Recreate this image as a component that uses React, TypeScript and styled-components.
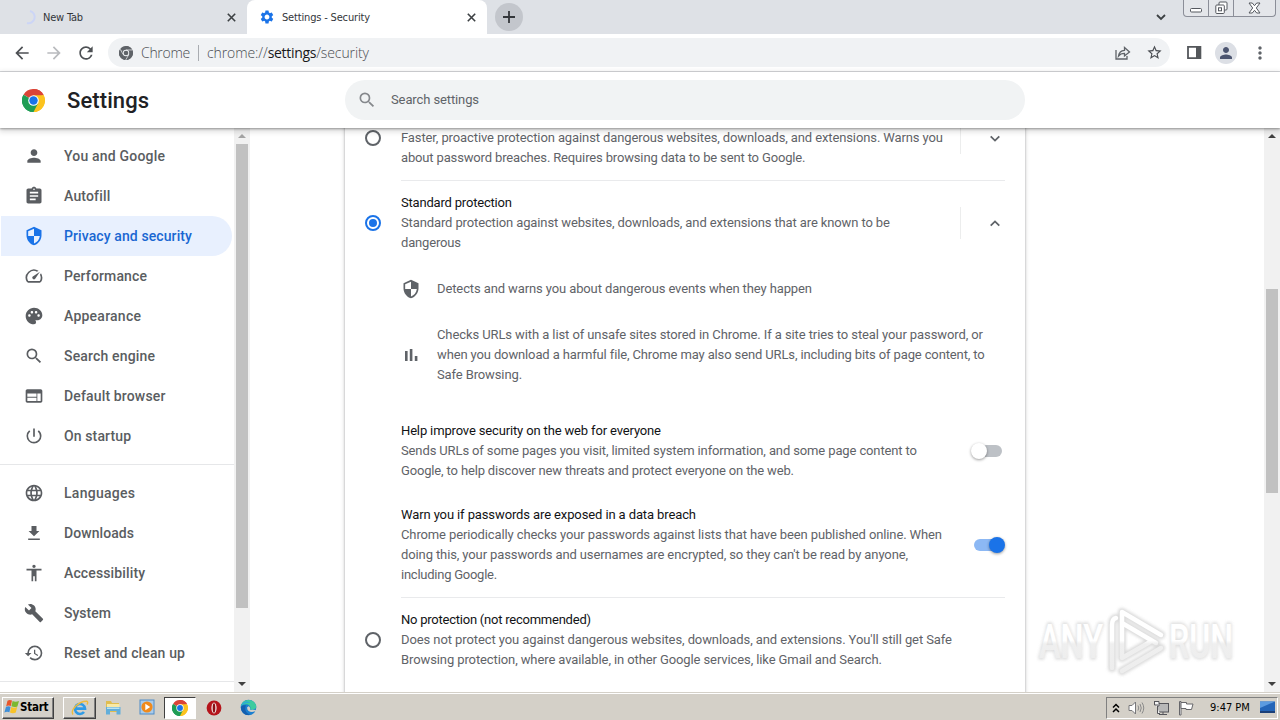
import React from 'react';
import styled, { createGlobalStyle } from 'styled-components';
import {
  MdAccessibility,
  MdArrowBack,
  MdArrowForward,
  MdAssignment,
  MdBuild,
  MdHistory,
  MdLanguage,
  MdMoreVert,
  MdPalette,
  MdPerson,
  MdPowerSettingsNew,
  MdRefresh,
  MdSearch,
  MdSecurity,
  MdSettings,
  MdSpeed,
  MdStarBorder,
  MdWeb,
} from 'react-icons/md';

const GlobalStyle = createGlobalStyle`
  * { box-sizing: border-box; }
  body {
    margin: 0;
    background: #fff;
    font-family: Roboto, "Liberation Sans", sans-serif;
    overflow: hidden;
  }
  svg { display: block; flex: none; }
`;

const Screen = styled.div`
  width: 1280px;
  height: 720px;
  display: flex;
  flex-direction: column;
  overflow: hidden;
  position: relative;
`;

/* ---------- tab strip ---------- */

const TabStrip = styled.div`
  height: 34px;
  flex: none;
  display: flex;
  background: #dee1e6;
  color: #3c4043;
`;

const Tab = styled.div<{ $active?: boolean }>`
  width: ${(p) => (p.$active ? 240 : 247)}px;
  height: 34px;
  display: flex;
  align-items: center;
  padding: 0 11px 0 ${(p) => (p.$active ? 12 : 22)}px;
  background: ${(p) => (p.$active ? '#fff' : 'transparent')};
  border-radius: 8px 8px 0 0;
  gap: ${(p) => (p.$active ? 7 : 6)}px;
`;

const TabTitle = styled.span<{ $track: number }>`
  flex: 1;
  padding-top: 1px;
  font: 11px/16px 'DejaVu Sans Condensed', 'DejaVu Sans', sans-serif;
  font-stretch: condensed;
  letter-spacing: ${(p) => p.$track}px;
  white-space: nowrap;
  color: #33363a;
`;

const NewTabButton = styled.div`
  width: 28px;
  height: 28px;
  margin: 3px 0 0 8px;
  border-radius: 50%;
  background: #c3c6cc;
  display: grid;
  place-items: center;
`;

const StripSpacer = styled.div`
  flex: 1;
`;

const TabSearch = styled.div`
  display: grid;
  place-items: center;
  width: 20px;
  margin-right: 12px;
`;

const WindowControls = styled.div`
  display: flex;
  height: 17px;
  width: 93px;
  margin-right: 4px;
  border: 1px solid #8b8e98;
  border-top: 0;
  border-radius: 0 0 4px 4px;
  background: #e4e6ea;
`;

const WindowButton = styled.div<{ $w: number }>`
  width: ${(p) => p.$w}px;
  display: grid;
  place-items: center;
  & + & {
    border-left: 1px solid #8b8e98;
  }
`;

/* ---------- toolbar ---------- */

const Toolbar = styled.div`
  height: 38px;
  flex: none;
  display: flex;
  align-items: center;
  padding: 0 12px 0 12px;
  background: #fff;
  border-bottom: 1px solid #d8dadd;
  color: #5f6368;
`;

const NavButtons = styled.div`
  display: flex;
  gap: 12px;
  margin-right: 12px;
`;

const Omnibox = styled.div`
  flex: 1;
  height: 29px;
  border-radius: 15px;
  background: #f0f2f4;
  display: flex;
  align-items: center;
  padding: 0 8px 0 11px;
  gap: 8px;
  font: 300 14px/20px 'Open Sans', sans-serif;
  color: #4a4d52;
`;

const ProductName = styled.span`
  letter-spacing: -0.3px;
  width: 49px;
  white-space: nowrap;
`;

const OmniDivider = styled.i`
  width: 1px;
  height: 16px;
  background: #a9acb1;
`;

const Url = styled.span`
  flex: 1;
  letter-spacing: -0.1px;
  b {
    font-weight: 400;
    color: #17181b;
    letter-spacing: -0.3px;
  }
`;

const OmniActions = styled.div`
  display: flex;
  gap: 15px;
  align-items: center;
  margin-right: -1px;
`;

const ToolbarActions = styled.div`
  display: flex;
  align-items: center;
  gap: 13px;
  margin-left: 17px;
  margin-right: -2px;
`;

const Avatar = styled.div`
  width: 22px;
  height: 22px;
  border-radius: 50%;
  background: #dcdfe5;
  color: #4c5570;
  display: grid;
  place-items: center;
`;

/* ---------- settings header ---------- */

const Header = styled.header`
  height: 56px;
  flex: none;
  display: flex;
  align-items: center;
  padding-left: 22px;
  background: #fff;
  box-shadow: 0 1px 2px rgba(0, 0, 0, 0.32), 0 2px 6px 1px rgba(0, 0, 0, 0.17);
  position: relative;
  z-index: 2;
`;

const PageTitle = styled.h1`
  margin: 2px 0 0 22px;
  width: 278px;
  font: 500 22px/30px Roboto, sans-serif;
  letter-spacing: 0.1px;
  color: #202124;
`;

const SearchBox = styled.div`
  width: 680px;
  height: 40px;
  border-radius: 20px;
  background: #f1f3f4;
  display: flex;
  align-items: center;
  gap: 14px;
  padding-left: 12px;
  color: #85888c;
  font-size: 13px;
  letter-spacing: -0.11px;
  span {
    padding-bottom: 1px;
    color: #5f6368;
  }
`;

/* ---------- body ---------- */

const Body = styled.div`
  height: 564px;
  flex: none;
  display: flex;
  overflow: hidden;
`;

const SideNav = styled.nav`
  width: 234px;
  padding-top: 8px;
  flex: none;
`;

const NavItem = styled.div<{ $active?: boolean; $track: number }>`
  height: 40px;
  margin: 0 2px 0 1px;
  padding-left: 23px;
  display: flex;
  align-items: center;
  gap: 20px;
  border-radius: 0 20px 20px 0;
  font-weight: 500;
  font-size: 14px;
  letter-spacing: ${(p) => p.$track}px;
  white-space: nowrap;
  color: ${(p) => (p.$active ? '#1967d2' : '#5a5d61')};
  background: ${(p) => (p.$active ? '#e8f0fe' : 'transparent')};
  svg {
    color: ${(p) => (p.$active ? '#1a73e8' : '#5a5d61')};
  }
`;

const NavRule = styled.hr`
  border: 0;
  height: 1px;
  background: #e6e7e9;
  margin: 8px 0;
`;

const Scrollbar = styled.div`
  width: 16px;
  height: 564px;
  flex: none;
  display: flex;
  flex-direction: column;
  align-items: center;
  background: #f1f1f1;
`;

const ScrollArrow = styled.div<{ $end?: boolean; $dim?: boolean }>`
  height: 16px;
  width: 16px;
  display: grid;
  place-items: center;
  margin-top: ${(p) => (p.$end ? 'auto' : 0)};
  color: ${(p) => (p.$dim ? '#a3a3a3' : '#404040')};
`;

const Thumb = styled.div<{ $offset: number; $length: number }>`
  width: 12px;
  margin-top: ${(p) => p.$offset}px;
  height: ${(p) => p.$length}px;
  background: #c1c1c1;
`;

const Main = styled.main`
  flex: 1;
  padding-left: 95px;
  overflow: hidden;
`;

const Card = styled.section`
  width: 680px;
  height: 640px;
  margin-top: -20px;
  background: #fff;
  box-shadow: 0 0 2px rgba(60, 64, 67, 0.36), 0 1px 4px 1px rgba(60, 64, 67, 0.16);
  padding: 0 20px;
`;

const Option = styled.div<{ $first?: boolean }>`
  display: flex;
  align-items: center;
  padding: ${(p) => (p.$first ? 0 : 12)}px 0 12px;
`;

const Divider = styled.hr`
  border: 0;
  height: 1px;
  margin: 0 0 0 36px;
  background: #e9eaec;
`;

const Radio = styled.i<{ $on?: boolean }>`
  width: 16px;
  height: 16px;
  flex: none;
  margin-right: 20px;
  border-radius: 50%;
  border: 2px solid ${(p) => (p.$on ? '#1a73e8' : '#5f6368')};
  display: grid;
  place-items: center;
  &::after {
    content: '';
    width: 8px;
    height: 8px;
    border-radius: 50%;
    background: ${(p) => (p.$on ? '#1a73e8' : 'transparent')};
  }
`;

const Copy = styled.div<{ $scrolled?: boolean }>`
  flex: 1;
  padding-top: ${(p) => (p.$scrolled ? 20 : 0)}px;
`;

const Line = styled.div<{ $track: number; $title?: boolean }>`
  font-size: 13px;
  line-height: 20px;
  white-space: nowrap;
  letter-spacing: ${(p) => p.$track}px;
  color: ${(p) => (p.$title ? '#121315' : '#5f6368')};
`;

const Expand = styled.div`
  height: 32px;
  width: 45px;
  border-left: 1px solid #eceded;
  display: flex;
  align-items: center;
  padding-left: 29px;
`;

const Detail = styled.div<{ $top: number }>`
  display: flex;
  align-items: center;
  gap: 16px;
  margin: ${(p) => p.$top}px 0 0 36px;
  color: #5f6368;
`;

const SubSetting = styled.div<{ $top: number }>`
  display: flex;
  align-items: center;
  margin: ${(p) => p.$top}px 0 0 36px;
`;

const Toggle = styled.div<{ $on?: boolean }>`
  width: 28px;
  height: 12px;
  margin-right: 3px;
  border-radius: 6px;
  background: ${(p) => (p.$on ? '#8cb8f4' : '#bdc1c6')};
  display: flex;
  align-items: center;
  justify-content: ${(p) => (p.$on ? 'flex-end' : 'flex-start')};
  &::after {
    content: '';
    width: 16px;
    height: 16px;
    margin: 0 -3px;
    flex: none;
    border-radius: 50%;
    background: ${(p) => (p.$on ? '#1a73e8' : '#fff')};
    box-shadow: 0 1px 3px rgba(0, 0, 0, 0.4);
  }
`;

const SectionEnd = styled.div`
  height: 12px;
`;

/* ---------- watermark ---------- */

const Watermark = styled.div`
  position: absolute;
  left: 1030px;
  top: 600px;
  z-index: 3;
`;

/* ---------- taskbar ---------- */

const Taskbar = styled.footer`
  height: 28px;
  flex: none;
  background: #d4d0c8;
  border-top: 1px solid #d4d0c8;
  box-shadow: inset 0 1px 0 #fff;
  display: flex;
  align-items: center;
  padding: 3px 2px 1px 2px;
`;

const StartButton = styled.div`
  width: 52px;
  height: 22px;
  display: flex;
  align-items: center;
  padding: 0 0 1px 1px;
  border: 1px solid;
  border-color: #fff #404040 #404040 #fff;
  box-shadow: inset -1px -1px 0 #808080;
  font: bold 11.5px/16px 'DejaVu Sans Condensed', 'DejaVu Sans', sans-serif;
  font-stretch: condensed;
  letter-spacing: -0.25px;
  color: #000;
`;

const TaskButton = styled.div<{ $state?: 'open' | 'active'; $w: number }>`
  width: ${(p) => p.$w}px;
  height: 22px;
  display: grid;
  place-items: center;
  border: 1px solid;
  border-color: ${(p) =>
    p.$state === 'open'
      ? '#fff #404040 #404040 #fff'
      : p.$state === 'active'
        ? '#404040 #fff #fff #404040'
        : 'transparent'};
  background: ${(p) => (p.$state === 'active' ? '#fff' : 'transparent')};
  box-shadow: ${(p) => (p.$state === 'open' ? 'inset -1px -1px 0 #808080' : 'none')};
`;

const TaskButtons = styled.div`
  display: flex;
  flex: 1;
  margin-left: 9px;
`;

const Tray = styled.div`
  height: 22px;
  width: 172px;
  display: flex;
  align-items: center;
  padding-left: 5px;
  border: 1px solid;
  border-color: #808080 #fff #fff #808080;
`;

const Clock = styled.span`
  margin: 0 10px 0 15px;
  font: 11px/16px 'DejaVu Sans Condensed', 'DejaVu Sans', sans-serif;
  font-stretch: condensed;
  width: 41px;
  white-space: nowrap;
  color: #000;
`;

const TrayIcons = styled.div`
  display: flex;
  align-items: center;
  gap: 8px;
`;

/* ---------- drawings ---------- */

function ChromeLogo({ size, mono }: { size: number; mono?: boolean }) {
  const [r, g, y, b] = mono
    ? ['#5f6368', '#5f6368', '#5f6368', '#5f6368']
    : ['#db4437', '#1f9d55', '#fcc31e', '#1a73e8'];
  return (
    <svg width={size} height={size} viewBox="0 0 48 48">
      <path d="M24 24 L3.2 12 A24 24 0 0 1 44.8 12 Z" fill={r} />
      <path d="M24 24 L44.8 12 A24 24 0 0 1 24 48 Z" fill={y} />
      <path d="M24 24 L24 48 A24 24 0 0 1 3.2 12 Z" fill={g} />
      <path d="M24 13 H44.8 L44.8 12 A24 24 0 0 0 24 0 Z" fill={r} />
      <path d="M33.5 29.5 L24 48 A24 24 0 0 0 44.8 13 H24 Z" fill={y} />
      <path d="M14.5 29.5 L3.2 12 A24 24 0 0 0 24 48 L33.5 29.5 Z" fill={g} />
      {mono && (
        <path
          d="M24 13.5 H46 M33.5 29.5 L23 48 M14.5 29.5 L4 11"
          stroke="#f0f2f4"
          strokeWidth="2.4"
          fill="none"
        />
      )}
      <circle cx="24" cy="24" r="11" fill={mono ? '#f0f2f4' : '#fff'} />
      <circle cx="24" cy="24" r={mono ? 8 : 8.8} fill={b} />
    </svg>
  );
}

function Spinner() {
  return (
    <svg width="15" height="16" viewBox="0 0 15 16" fill="none">
      <path d="M8 2 A6 6 0 0 1 5 14" stroke="#ccd5f6" strokeWidth="2" />
    </svg>
  );
}

function CloseIcon() {
  return (
    <svg width="9" height="9" viewBox="0 0 9 9" stroke="#3c4043" strokeWidth="1.6">
      <path d="M0.8 0.8 L8.2 8.2 M8.2 0.8 L0.8 8.2" />
    </svg>
  );
}

function Chevron({ up }: { up?: boolean }) {
  return (
    <svg width="10" height="7" viewBox="0 0 10 7" fill="none" stroke="#5f6368" strokeWidth="1.8">
      <path d={up ? 'M0.7 5.7 L5 1.4 L9.3 5.7' : 'M0.7 1.3 L5 5.6 L9.3 1.3'} />
    </svg>
  );
}

function BarsIcon() {
  return (
    <svg width="20" height="20" viewBox="0 0 20 20" fill="currentColor">
      <path d="M4 6 H6.6 V16 H4 Z M8.8 4 H11.4 V16 H8.8 Z M13.8 11 H16.4 V16 H13.8 Z" />
    </svg>
  );
}

function ShareIcon() {
  return (
    <svg width="17" height="16" viewBox="0 0 17 16" fill="none" stroke="#5f6368" strokeWidth="1.3">
      <path d="M2 5 V14 H13 V11" />
      <path d="M4.5 11 C5 7 7.5 5.5 10.5 5.3 V2.5 L15.5 7 L10.5 11 V8.4 C8 8.4 6 9 4.5 11 Z" />
    </svg>
  );
}

function SidePanelIcon() {
  return (
    <svg width="15" height="15" viewBox="0 0 15 15">
      <path d="M1 1.8 H13.4 V13.2 H1 Z" fill="none" stroke="#54575b" strokeWidth="1.8" />
      <path d="M9 1 H14 V14 H9 Z" fill="#54575b" />
    </svg>
  );
}

function DownloadIcon() {
  return (
    <svg width="20" height="20" viewBox="0 0 24 24" fill="currentColor">
      <path d="M18.5 9.5h-3.5V3.5h-6v6h-3.5L12 16z M5 18.5v2h14v-2z" />
    </svg>
  );
}

function Arrow({ down }: { down?: boolean }) {
  return (
    <svg width="8" height="4" viewBox="0 0 8 4" fill="currentColor">
      <path d={down ? 'M0 0 H8 L4 4 Z' : 'M0 4 H8 L4 0 Z'} />
    </svg>
  );
}

function WindowsFlag() {
  return (
    <svg width="16" height="16" viewBox="0 0 16 16">
      <path d="M3.5 1.8 Q5.5 0.4 8 1.6 L6.8 7 Q4.5 6 2.2 7.2 Z" fill="#e8562a" />
      <path d="M8.6 2 Q11.5 3.4 15 2 L13.4 7.4 Q10.5 8.6 7.4 7.3 Z" fill="#7cb82f" />
      <path d="M2 7.8 Q4.3 6.7 6.6 7.7 L5.4 13.2 Q3 12 0.4 13.4 Z" fill="#3f8fd8" />
      <path d="M7.2 8 Q10 9.3 13.2 7.9 L11.8 13.6 Q9 15 6 13.6 Z" fill="#f8c329" />
    </svg>
  );
}

function ExplorerIcon() {
  return (
    <svg width="18" height="18" viewBox="0 0 18 18" fill="none">
      <path d="M4.2 9.6 H14 A5 5 0 1 0 13 13" stroke="#2f9be6" strokeWidth="2.6" />
      <path d="M2 15.5 C-1 11 8 2 15.5 2.2 C17 2.5 17 4 16 5.5" stroke="#eebb3c" strokeWidth="1.4" />
    </svg>
  );
}

function FolderIcon() {
  return (
    <svg width="18" height="17" viewBox="0 0 18 17">
      <path d="M2 2 H7 L8 4 H15 V13 H2 Z" fill="#e0bd50" />
      <path d="M3 5 H15.5 V9 H3 Z" fill="#f8e9a6" />
      <path d="M2 8 H16.5 V15.5 H12.5 V12 H6 V15.5 H2 Z" fill="#62aeda" />
      <path d="M3 8.5 H15.5 V10 H3 Z" fill="#b9e2f2" />
    </svg>
  );
}

function MediaIcon() {
  return (
    <svg width="17" height="17" viewBox="0 0 17 17">
      <rect x="1" y="1" width="14" height="14" fill="#a9cbea" stroke="#4e8cc8" />
      <circle cx="8" cy="8" r="5.6" fill="#f08a1c" />
      <path d="M6.3 4.8 L11.2 8 L6.3 11.2 Z" fill="#fff" />
    </svg>
  );
}

function OperaIcon() {
  return (
    <svg width="16" height="16" viewBox="0 0 16 16">
      <circle cx="8" cy="8" r="7.4" fill="#b5141b" />
      <ellipse cx="8" cy="8" rx="2.6" ry="5.4" fill="#f6e9e8" />
      <ellipse cx="8" cy="8" rx="1.3" ry="4.7" fill="#8b0e13" />
    </svg>
  );
}

function EdgeIcon() {
  return (
    <svg width="17" height="17" viewBox="0 0 17 17">
      <circle cx="8.5" cy="8.5" r="7.8" fill="#1b7fd0" />
      <path d="M1 7 C2.5 -1 14.5 -1 16.2 7 C16.6 10.5 12 11.5 10 10.4 C11.5 8 9 5 6 5.2 C3.5 5.2 1.8 6.2 1 7 Z" fill="#3ccb9f" />
      <path d="M1 7 C3 1.5 9 2 10.5 4 C7 3.2 3.5 4.5 1 7 Z" fill="#2aa9dc" />
      <path d="M7.2 8.3 C6.6 12 10.5 14 14.6 12.6 L16.5 11 L12.5 10.8 C10.8 11.2 9.7 10.7 10 10 C10.5 9 9.5 7.2 8.6 7.2 Z" fill="#d4d0c8" />
      <path d="M6 6.5 C4 10 6 15 11 15.6 C5 17.5 0.5 13 1 8 C2 6.5 4 6 6 6.5 Z" fill="#155fae" />
    </svg>
  );
}

function SpeakerIcon() {
  return (
    <svg width="17" height="16" viewBox="0 0 17 16" fill="#fff" stroke="#77777a">
      <path d="M1 5.5 H4 L7.5 2 V14 L4 10.5 H1 Z" />
      <path d="M10 5.5 Q11.5 8 10 10.5 M12 4 Q14.5 8 12 12 M14 2.5 Q17.5 8 14 13.5" fill="none" stroke="#8a8a8a" />
    </svg>
  );
}

function NetworkIcon() {
  return (
    <svg width="17" height="16" viewBox="0 0 17 16" stroke="#55555a">
      <rect x="4.5" y="3.5" width="11" height="8.5" fill="#b8b8b8" />
      <path d="M6 14.5 H14 M10 12 V14" />
      <path d="M1 1.5 H6 V6 H4.5 V13.5 H7" fill="#f4f4f4" />
      <path d="M1.5 1.5 V5 H5" fill="none" />
    </svg>
  );
}

function FlagIcon() {
  return (
    <svg width="17" height="16" viewBox="0 0 17 16" fill="#fff" stroke="#66666a">
      <path d="M1.5 1.5 H3 V15 H1.5 Z" />
      <path d="M3 2.5 H8.5 V4 H15 L13.5 9.5 H8 V8.5 H3 Z" />
    </svg>
  );
}

function DesktopIcon() {
  return (
    <svg width="17" height="15" viewBox="0 0 17 15">
      <path d="M0 1.5 H15 V11 H0 Z" fill="#2465b8" />
      <path d="M0 1.5 H15 L0 8 Z" fill="#5c9be0" />
      <path d="M0 11 H15 V13 H0 Z" fill="#1b3f78" />
    </svg>
  );
}

function AnyRunMark() {
  const shapes = (
    <>
      <path d="M82 64 V25 Q82 19 86 18" />
      <path d="M92 56 V12 L131 35 M92 23 L126 43" />
      <path d="M92 58 L120 42 M92 71 L131 48 M82 64 V68" />
    </>
  );
  const words = (
    <>
      <text x="9" y="58" textLength="64" lengthAdjust="spacingAndGlyphs">ANY</text>
      <text x="139" y="58" textLength="64" lengthAdjust="spacingAndGlyphs">RUN</text>
    </>
  );
  return (
    <svg width="250" height="88" viewBox="0 0 250 88" fontFamily="Roboto, sans-serif" fontWeight="500" fontSize="49">
      <defs>
        <filter id="halo" x="-10%" y="-20%" width="120%" height="140%">
          <feGaussianBlur stdDeviation="1.4" />
        </filter>
        <linearGradient id="fade" x1="0" y1="0" x2="0" y2="88" gradientUnits="userSpaceOnUse">
          <stop offset="0.46" stopColor="#ffffff" />
          <stop offset="0.5" stopColor="#efefef" />
          <stop offset="1" stopColor="#ececec" />
        </linearGradient>
      </defs>
      <g filter="url(#halo)" opacity="0.75" fill="none" stroke="#cfcfcf" strokeLinecap="round" strokeLinejoin="round">
        <g strokeWidth="8">{shapes}</g>
        <g strokeWidth="3">{words}</g>
      </g>
      <g fill="none" stroke="url(#fade)" strokeWidth="4.5" strokeLinecap="round" strokeLinejoin="round">
        {shapes}
      </g>
      <g fill="url(#fade)">{words}</g>
    </svg>
  );
}

/* ---------- page ---------- */

const navTop = [
  { label: 'You and Google', icon: <MdPerson size={20} />, track: 0.19 },
  { label: 'Autofill', icon: <MdAssignment size={20} />, track: 0.17 },
  { label: 'Privacy and security', icon: <MdSecurity size={20} />, track: 0.1, active: true },
  { label: 'Performance', icon: <MdSpeed size={20} />, track: 0.14 },
  { label: 'Appearance', icon: <MdPalette size={20} />, track: 0.24 },
  { label: 'Search engine', icon: <MdSearch size={20} />, track: 0.17 },
  { label: 'Default browser', icon: <MdWeb size={20} />, track: 0.15 },
  { label: 'On startup', icon: <MdPowerSettingsNew size={20} />, track: 0.12 },
];

const navBottom = [
  { label: 'Languages', icon: <MdLanguage size={20} />, track: 0.27 },
  { label: 'Downloads', icon: <DownloadIcon />, track: 0.07 },
  { label: 'Accessibility', icon: <MdAccessibility size={20} />, track: 0.13 },
  { label: 'System', icon: <MdBuild size={20} />, track: 0.02 },
  { label: 'Reset and clean up', icon: <MdHistory size={20} />, track: 0.13 },
];

export default function App() {
  return (
    <Screen>
      <GlobalStyle />
      <TabStrip>
        <Tab>
          <Spinner />
          <TabTitle $track={-0.2}>New Tab</TabTitle>
          <CloseIcon />
        </Tab>
        <Tab $active>
          <MdSettings size={16} color="#1a73e8" />
          <TabTitle $track={-0.17}>Settings - Security</TabTitle>
          <CloseIcon />
        </Tab>
        <NewTabButton>
          <svg width="12" height="12" viewBox="0 0 12 12" stroke="#33363a" strokeWidth="1.8">
            <path d="M6 0 V12 M0 6 H12" />
          </svg>
        </NewTabButton>
        <StripSpacer />
        <TabSearch>
          <svg width="10" height="7" viewBox="0 0 10 7" fill="none" stroke="#3c4043" strokeWidth="1.8">
            <path d="M1 1 L5 5 L9 1" />
          </svg>
        </TabSearch>
        <WindowControls>
          <WindowButton $w={24}>
            <svg width="12" height="16" viewBox="0 0 12 16" fill="#fff" stroke="#55585f">
              <rect x="0.5" y="8.5" width="11" height="3.5" rx="1" />
            </svg>
          </WindowButton>
          <WindowButton $w={25}>
            <svg width="13" height="14" viewBox="0 0 13 14" fill="#fff" stroke="#55585f">
              <rect x="4" y="1" width="8" height="8" rx="1" />
              <rect x="0.8" y="4" width="8.5" height="8.5" rx="1" />
              <rect x="3.5" y="6.8" width="3" height="3" />
            </svg>
          </WindowButton>
          <WindowButton $w={42}>
            <svg width="13" height="12" viewBox="0 0 13 12" fill="#fff" stroke="#55585f">
              <path d="M1 1 H4.3 L6.5 3.7 L8.7 1 H12 L8.3 6 L12 11 H8.7 L6.5 8.3 L4.3 11 H1 L4.7 6 Z" />
            </svg>
          </WindowButton>
        </WindowControls>
      </TabStrip>

      <Toolbar>
        <NavButtons>
          <MdArrowBack size={20} color="#4d5054" />
          <MdArrowForward size={20} color="#b9bbbe" />
          <MdRefresh size={20} color="#4d5054" />
        </NavButtons>
        <Omnibox>
          <ChromeLogo size={14} mono />
          <ProductName>Chrome</ProductName>
          <OmniDivider />
          <Url>
            chrome://<b>settings</b>/security
          </Url>
          <OmniActions>
            <ShareIcon />
            <MdStarBorder size={17} />
          </OmniActions>
        </Omnibox>
        <ToolbarActions>
          <SidePanelIcon />
          <Avatar>
            <MdPerson size={18} />
          </Avatar>
          <MdMoreVert size={20} />
        </ToolbarActions>
      </Toolbar>

      <Header>
        <ChromeLogo size={23} />
        <PageTitle>Settings</PageTitle>
        <SearchBox>
          <MdSearch size={20} />
          <span>Search settings</span>
        </SearchBox>
      </Header>

      <Body>
        <SideNav>
          {navTop.map((n) => (
            <NavItem key={n.label} $track={n.track} $active={n.active}>
              {n.icon}
              {n.label}
            </NavItem>
          ))}
          <NavRule />
          {navBottom.map((n) => (
            <NavItem key={n.label} $track={n.track}>
              {n.icon}
              {n.label}
            </NavItem>
          ))}
          <NavRule />
        </SideNav>
        <Scrollbar>
          <ScrollArrow $dim>
            <Arrow />
          </ScrollArrow>
          <Thumb $offset={0} $length={464} />
          <ScrollArrow $end>
            <Arrow down />
          </ScrollArrow>
        </Scrollbar>

        <Main>
          <Card>
            <Option $first>
              <Radio />
              <Copy $scrolled>
                <Line $track={-0.11}>
                  Faster, proactive protection against dangerous websites, downloads, and extensions. Warns you
                </Line>
                <Line $track={-0.15}>about password breaches. Requires browsing data to be sent to Google.</Line>
              </Copy>
              <Expand>
                <Chevron />
              </Expand>
            </Option>
            <Divider />
            <Option>
              <Radio $on />
              <Copy>
                <Line $title $track={-0.19}>Standard protection</Line>
                <Line $track={-0.12}>
                  Standard protection against websites, downloads, and extensions that are known to be
                </Line>
                <Line $track={-0.17}>dangerous</Line>
              </Copy>
              <Expand>
                <Chevron up />
              </Expand>
            </Option>
            <Detail $top={14}>
              <MdSecurity size={20} />
              <Line $track={-0.11}>Detects and warns you about dangerous events when they happen</Line>
            </Detail>
            <Detail $top={26}>
              <BarsIcon />
              <div>
                <Line $track={-0.092}>
                  Checks URLs with a list of unsafe sites stored in Chrome. If a site tries to steal your password, or
                </Line>
                <Line $track={-0.13}>
                  when you download a harmful file, Chrome may also send URLs, including bits of page content, to
                </Line>
                <Line $track={-0.12}>Safe Browsing.</Line>
              </div>
            </Detail>
            <SubSetting $top={36}>
              <Copy>
                <Line $title $track={-0.148}>Help improve security on the web for everyone</Line>
                <Line $track={-0.124}>
                  Sends URLs of some pages you visit, limited system information, and some page content to
                </Line>
                <Line $track={-0.154}>Google, to help discover new threats and protect everyone on the web.</Line>
              </Copy>
              <Toggle />
            </SubSetting>
            <SubSetting $top={24}>
              <Copy>
                <Line $title $track={-0.112}>Warn you if passwords are exposed in a data breach</Line>
                <Line $track={-0.119}>
                  Chrome periodically checks your passwords against lists that have been published online. When
                </Line>
                <Line $track={-0.112}>
                  doing this, your passwords and usernames are encrypted, so they can't be read by anyone,
                </Line>
                <Line $track={-0.25}>including Google.</Line>
              </Copy>
              <Toggle $on />
            </SubSetting>
            <SectionEnd />
            <Divider />
            <Option>
              <Radio />
              <Copy>
                <Line $title $track={-0.232}>No protection (not recommended)</Line>
                <Line $track={-0.092}>
                  Does not protect you against dangerous websites, downloads, and extensions. You'll still get Safe
                </Line>
                <Line $track={-0.103}>
                  Browsing protection, where available, in other Google services, like Gmail and Search.
                </Line>
              </Copy>
            </Option>
          </Card>
        </Main>
        <Scrollbar>
          <ScrollArrow>
            <Arrow />
          </ScrollArrow>
          <Thumb $offset={145} $length={204} />
          <ScrollArrow $end>
            <Arrow down />
          </ScrollArrow>
        </Scrollbar>
      </Body>

      <Taskbar>
        <StartButton>
          <WindowsFlag />
          Start
        </StartButton>
        <TaskButtons>
          <TaskButton $state="open" $w={33}>
            <ExplorerIcon />
          </TaskButton>
          <TaskButton $w={34}>
            <FolderIcon />
          </TaskButton>
          <TaskButton $w={34}>
            <MediaIcon />
          </TaskButton>
          <TaskButton $state="active" $w={32}>
            <ChromeLogo size={16} />
          </TaskButton>
          <TaskButton $w={36}>
            <OperaIcon />
          </TaskButton>
          <TaskButton $w={33}>
            <EdgeIcon />
          </TaskButton>
        </TaskButtons>
        <Tray>
          <TrayIcons>
            <svg width="8" height="10" viewBox="0 0 8 10" fill="none" stroke="#000" strokeWidth="1.5">
              <path d="M1 4.5 L4 1.5 L7 4.5 M1 9 L4 6 L7 9" />
            </svg>
            <SpeakerIcon />
            <NetworkIcon />
            <FlagIcon />
          </TrayIcons>
          <Clock>9:47 PM</Clock>
          <DesktopIcon />
        </Tray>
      </Taskbar>

      <Watermark>
        <AnyRunMark />
      </Watermark>
    </Screen>
  );
}
